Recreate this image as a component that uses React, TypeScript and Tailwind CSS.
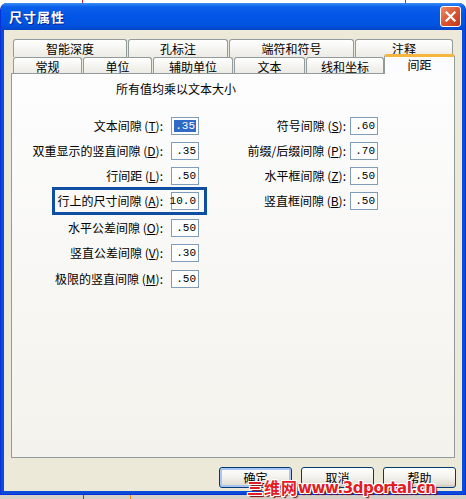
import React from 'react';

type Row = { label: string; hot: string; value: string; mt: string; selected?: boolean; boxed?: boolean };

const leftRows: Row[] = [
  { label: '文本间隙', hot: 'T', value: '.35', mt: 'mt-0', selected: true },
  { label: '双重显示的竖直间隙', hot: 'D', value: '.35', mt: 'mt-[7px]' },
  { label: '行间距', hot: 'L', value: '.50', mt: 'mt-[7px]' },
  { label: '行上的尺寸间隙', hot: 'A', value: '10.0', mt: 'mt-[7px]', boxed: true },
  { label: '水平公差间隙', hot: 'O', value: '.50', mt: 'mt-[9px]' },
  { label: '竖直公差间隙', hot: 'V', value: '.30', mt: 'mt-[7px]' },
  { label: '极限的竖直间隙', hot: 'M', value: '.50', mt: 'mt-[8px]' },
];

const rightRows: Row[] = [
  { label: '符号间隙', hot: 'S', value: '.60', mt: 'mt-0' },
  { label: '前缀/后缀间隙', hot: 'P', value: '.70', mt: 'mt-[7px]' },
  { label: '水平框间隙', hot: 'Z', value: '.50', mt: 'mt-[7px]' },
  { label: '竖直框间隙', hot: 'B', value: '.50', mt: 'mt-[7px]' },
];

const backTabs = [
  { name: '智能深度', w: 'w-[114px]' },
  { name: '孔标注', w: 'w-[100px]' },
  { name: '端符和符号', w: 'w-[125px]' },
  { name: '注释', w: 'w-[98px]' },
];

const frontTabs = [
  { name: '常规', w: 'w-[69px]' },
  { name: '单位', w: 'w-[69px]' },
  { name: '辅助单位', w: 'w-[80px]' },
  { name: '文本', w: 'w-[71px]' },
  { name: '线和坐标', w: 'w-[78px]' },
];

function EditBox({ value, selected }: { value: string; selected?: boolean }) {
  return (
    <div className="w-[28px] h-[18px] border border-[#7F9DB9] bg-white flex items-center justify-end pr-[2px] font-['Liberation_Mono',monospace] text-[11px] leading-[12px] text-black">
      {selected ? <span className="bg-[#316AC5] text-white px-px">{value}</span> : value}
    </div>
  );
}

function FieldRow({ row, labelW, gap }: { row: Row; labelW: string; gap: string }) {
  return (
    <div className={`relative flex items-center h-[18px] ${row.mt}`}>
      <div className={`${labelW} text-right text-[12px] leading-[14px] whitespace-nowrap`}>
        {row.label} (<u>{row.hot}</u>):
      </div>
      <div className={gap}>
        <EditBox value={row.value} selected={row.selected} />
      </div>
      {row.boxed && (
        <div className="absolute left-[40px] -right-[8px] -top-[5px] -bottom-[5px] border-[3px] border-[#0E4FA3]" />
      )}
    </div>
  );
}

function Button({ label, isDefault }: { label: string; isDefault?: boolean }) {
  return (
    <div
      className={`w-[73px] h-[21px] rounded-[3px] border border-[#003C74] bg-linear-to-b from-white via-[#F2F1EC] to-[#DCD8CC] flex items-center justify-center text-[12px] leading-[14px] ${
        isDefault ? 'shadow-[inset_0_0_0_2px_#A9C4F2]' : 'shadow-[inset_0_-2px_0_#D6D0C2]'
      }`}
    >
      {label}
    </div>
  );
}

export default function App() {
  return (
    <div className="relative w-[466px] h-[499px] bg-white flex flex-col font-['Noto_Sans_CJK_SC',sans-serif] text-black overflow-hidden">
      {/* strip of the window behind */}
      <div className="h-[3px] flex">
        <div className="ml-[82px] w-px bg-[#D0202A]" />
        <div className="ml-[322px] w-px bg-[#D0202A]" />
      </div>

      {/* window */}
      <div className="h-[492px] flex flex-col rounded-t-[7px] overflow-hidden bg-[#0A4AD8] border-x border-b border-[#0831D9]">
        <div className="h-[27px] shrink-0 flex items-center justify-between pl-[8px] pr-[4px] bg-[linear-gradient(to_bottom,#3D8FF5_0%,#0A60EA_14%,#0356E6_45%,#0152E0_82%,#0346C8_100%)]">
          <span className="text-white font-bold text-[13px] tracking-[1px] [text-shadow:1px_1px_0_#0A1E8A]">尺寸属性</span>
          <div className="w-[21px] h-[21px] rounded-[3px] border border-white bg-linear-to-br from-[#EE8A66] via-[#DB5532] to-[#C2391A] flex items-center justify-center">
            <svg width="11" height="11" viewBox="0 0 11 11">
              <path d="M1.5 1.5L9.5 9.5M9.5 1.5L1.5 9.5" stroke="white" strokeWidth="2.2" strokeLinecap="square" />
            </svg>
          </div>
        </div>

        <div className="flex-1 mx-[3px] mb-[3px] bg-[#ECE9D8] flex flex-col pt-[9px] px-[7px]">
          {/* back tab row */}
          <div className="h-[18px] flex gap-px ml-[2px]">
            {backTabs.map((t) => (
              <div
                key={t.name}
                className={`${t.w} h-[18px] rounded-t-[3px] border border-b-0 border-[#919B9C] bg-linear-to-b from-white to-[#ECEBE5] flex justify-center pt-[2px] text-[12px] leading-[14px]`}
              >
                {t.name}
              </div>
            ))}
          </div>
          {/* front tab row */}
          <div className="h-[16px] flex items-end gap-px ml-[2px] relative z-10">
            {frontTabs.map((t) => (
              <div
                key={t.name}
                className={`${t.w} h-[16px] rounded-t-[3px] border border-b-0 border-[#919B9C] bg-linear-to-b from-white to-[#ECEBE5] flex justify-center pt-[2px] text-[12px] leading-[13px]`}
              >
                {t.name}
              </div>
            ))}
            <div className="w-[71px] h-[20px] -mb-px -ml-px rounded-t-[3px] border-x border-[#919B9C] border-t-[3px] border-t-[#F5B53F] bg-[#FCFCFE] flex justify-center pt-[1px] text-[12px] leading-[13px]">
              间距
            </div>
          </div>

          {/* panel */}
          <div className="h-[385px] border border-[#919B9C] bg-linear-to-b from-[#FDFDFE] to-[#F3F2EC] flex flex-col">
            <div className="mt-[8px] pl-[104px] text-[12px] leading-[14px]">所有值均乘以文本大小</div>
            <div className="mt-[21px] flex">
              <div className="flex flex-col">
                {leftRows.map((r) => (
                  <FieldRow key={r.hot} row={r} labelW="w-[151px]" gap="ml-[8px]" />
                ))}
              </div>
              <div className="flex flex-col">
                {rightRows.map((r) => (
                  <FieldRow key={r.hot} row={r} labelW="w-[147px]" gap="ml-[4px]" />
                ))}
              </div>
            </div>
          </div>

          <div className="mt-[9px] flex justify-end gap-[9px] -mr-px">
            <Button label="确定" isDefault />
            <Button label="取消" />
            <Button label="帮助" />
          </div>
        </div>
      </div>

      <div className="flex-1 bg-[#D4D0C8] flex">
        <div className="ml-[83px] w-px bg-[#D0202A]" />
        <div className="ml-[46px] w-px bg-[#E08A20]" />
      </div>

      {/* site watermark over the screenshot */}
      <div className="absolute left-[247px] top-[478px] flex items-end font-bold text-[#E31B25] [text-shadow:1px_0_0_#fff,-1px_0_0_#fff,0_1px_0_#fff,0_-1px_0_#fff,1px_1px_0_#fff,-1px_-1px_0_#fff,1px_-1px_0_#fff,-1px_1px_0_#fff,2px_2px_1px_#7a0a0a]">
        <span className="text-[16px] leading-[18px] tracking-[1px]">三维网</span>
        <span className="font-['DejaVu_Sans',sans-serif] text-[15px] leading-[16px] tracking-[-0.4px]">www.3dportal.cn</span>
      </div>
    </div>
  );
}
